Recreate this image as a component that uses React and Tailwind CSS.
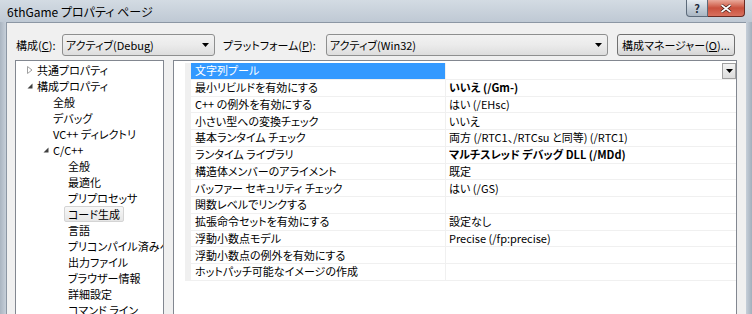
import React from "react";

const tree = [
  { label: "共通プロパティ", level: 0, arrow: "closed" },
  { label: "構成プロパティ", level: 0, arrow: "open" },
  { label: "全般", level: 1 },
  { label: "デバッグ", level: 1 },
  { label: "VC++ ディレクトリ", level: 1 },
  { label: "C/C++", level: 1, arrow: "open" },
  { label: "全般", level: 2 },
  { label: "最適化", level: 2 },
  { label: "プリプロセッサ", level: 2 },
  { label: "コード生成", level: 2, selected: true },
  { label: "言語", level: 2 },
  { label: "プリコンパイル済みヘッダー", level: 2 },
  { label: "出力ファイル", level: 2 },
  { label: "ブラウザー情報", level: 2 },
  { label: "詳細設定", level: 2 },
  { label: "コマンド ライン", level: 2 },
];

const indent = ["pl-[11px]", "pl-[27px]", "pl-[42px]"];

const props = [
  { name: "文字列プール", value: "", selected: true },
  { name: "最小リビルドを有効にする", value: "いいえ (/Gm-)", bold: true },
  { name: "C++ の例外を有効にする", value: "はい (/EHsc)" },
  { name: "小さい型への変換チェック", value: "いいえ" },
  { name: "基本ランタイム チェック", value: "両方 (/RTC1、/RTCsu と同等) (/RTC1)" },
  { name: "ランタイム ライブラリ", value: "マルチスレッド デバッグ DLL (/MDd)", bold: true },
  { name: "構造体メンバーのアライメント", value: "既定" },
  { name: "バッファー セキュリティ チェック", value: "はい (/GS)" },
  { name: "関数レベルでリンクする", value: "" },
  { name: "拡張命令セットを有効にする", value: "設定なし" },
  { name: "浮動小数点モデル", value: "Precise (/fp:precise)" },
  { name: "浮動小数点の例外を有効にする", value: "" },
  { name: "ホットパッチ可能なイメージの作成", value: "" },
];

function DownArrow() {
  return (
    <svg width="7" height="4" viewBox="0 0 7 4">
      <path d="M0 0h7L3.5 4z" fill="#000" />
    </svg>
  );
}

function TreeArrow({ kind }) {
  if (kind === "closed")
    return (
      <svg width="6" height="8" viewBox="0 0 6 8">
        <path d="M0.5 0.5v7l4.5-3.5z" fill="#fff" stroke="#a0a0a0" />
      </svg>
    );
  if (kind === "open")
    return (
      <svg width="6" height="6" viewBox="0 0 6 6">
        <path d="M5.5 0.5v5h-5z" fill="#404040" />
      </svg>
    );
  return null;
}

function Combo({ text, w }) {
  return (
    <div
      className={`${w} h-[22px] flex items-center justify-between pl-[3px] pr-[5px] rounded-[3px] border border-[#8e8f8f] bg-gradient-to-b from-[#f2f2f2] via-[#ebebeb] to-[#dddddd]`}
    >
      <span>{text}</span>
      <DownArrow />
    </div>
  );
}

export default function App() {
  return (
    <div className="w-[752px] h-[314px] overflow-hidden bg-[#c2ccd7] font-['Noto_Sans_CJK_JP',sans-serif] text-[11px] leading-none text-black [font-feature-settings:'palt']">
      {/* タイトルバー */}
      <div className="h-[22px] flex items-start bg-gradient-to-b from-[#d3dbe3] to-[#bfc9d4]">
        <span className="pl-[7px] pt-[6px] text-[12px]">6thGame プロパティ ページ</span>
        <div className="ml-auto mr-[7px] flex">
          <div className="w-[22px] h-[17px] flex items-center justify-center rounded-bl-[4px] border border-t-0 border-[#5c6a7a] bg-gradient-to-b from-[#e6ecf2] via-[#c5cfd9] to-[#aab6c3] text-[11px] font-bold text-[#1c2a3a]">
            ?
          </div>
          <div className="w-[37px] h-[17px] flex items-center justify-center rounded-br-[4px] border border-t-0 border-l-0 border-[#6b2a22] bg-gradient-to-b from-[#e9a99b] via-[#c9503d] to-[#d8705e]">
            <svg width="12" height="9" viewBox="0 0 12 9">
              <path d="M1.5 1l9 7M10.5 1l-9 7" stroke="#3a1510" strokeWidth="3" />
              <path d="M1.5 1l9 7M10.5 1l-9 7" stroke="#fff" strokeWidth="1.6" />
            </svg>
          </div>
        </div>
      </div>

      <div className="flex h-[292px]">
        <div className="w-[6px] bg-gradient-to-r from-[#aab5c1] to-[#c6cfd9]" />
        <div className="w-[740px] border-l border-t border-[#8c97a4] bg-[#f0f0f0]">
          {/* 構成 / プラットフォーム */}
          <div className="flex items-center mt-[11px] pl-[9px]">
            <span className="w-[46px]">
              構成(<u>C</u>):
            </span>
            <Combo text="アクティブ(Debug)" w="w-[153px]" />
            <span className="w-[103px] ml-[8px]">
              プラットフォーム(<u>P</u>):
            </span>
            <Combo text="アクティブ(Win32)" w="w-[282px]" />
            <div className="ml-[9px] w-[118px] h-[22px] flex items-center justify-center rounded-[3px] border border-[#707070] bg-gradient-to-b from-[#f2f2f2] via-[#ebebeb] to-[#d5d5d5]">
              構成マネージャー(<u>O</u>)...
            </div>
          </div>

          {/* パネル */}
          <div className="flex mt-[4px] pl-[8px]">
            <div className="w-[149px] h-[260px] overflow-hidden border border-[#828790] bg-white pt-[1px]">
              {tree.map((t, i) => (
                <div key={i} className={`h-[16px] flex items-center whitespace-nowrap ${indent[t.level]}`}>
                  <span className="w-[6px] shrink-0 flex items-center justify-center">
                    <TreeArrow kind={t.arrow} />
                  </span>
                  <span
                    className={`shrink-0 px-[3px] h-[16px] flex items-center rounded-[2px] border ${
                      t.selected
                        ? "border-[#d4d4d4] bg-gradient-to-b from-[#f8f8f8] to-[#e6e6e6]"
                        : "border-transparent"
                    }`}
                  >
                    {t.label}
                  </span>
                </div>
              ))}
            </div>

            <div className="ml-[9px] w-[564px] h-[260px] border border-[#828790] bg-white pt-[2px] pl-[11px]">
              {props.map((p, i) => (
                <div key={i} className="flex h-[16.75px]">
                  <div className="w-[6px] bg-[#f0f0f0]" />
                  <div
                    className={`w-[255px] flex items-center pl-[4px] border-r border-b border-[#f0f0f0] ${
                      p.selected ? "bg-[#3399ff] text-white" : ""
                    }`}
                  >
                    {p.name}
                  </div>
                  <div
                    className={`flex-1 flex items-center justify-between pl-[3px] border-b border-[#f0f0f0] ${
                      p.bold ? "font-bold" : ""
                    }`}
                  >
                    <span>{p.value}</span>
                    {p.selected && (
                      <span className="w-[14px] h-[16px] flex items-center justify-center border border-[#a0a0a0] bg-gradient-to-b from-[#f3f3f3] to-[#dcdcdc]">
                        <DownArrow />
                      </span>
                    )}
                  </div>
                </div>
              ))}
            </div>
          </div>
        </div>
        <div className="w-[6px] bg-gradient-to-r from-[#c6cfd9] to-[#a3afbc]" />
      </div>
    </div>
  );
}
